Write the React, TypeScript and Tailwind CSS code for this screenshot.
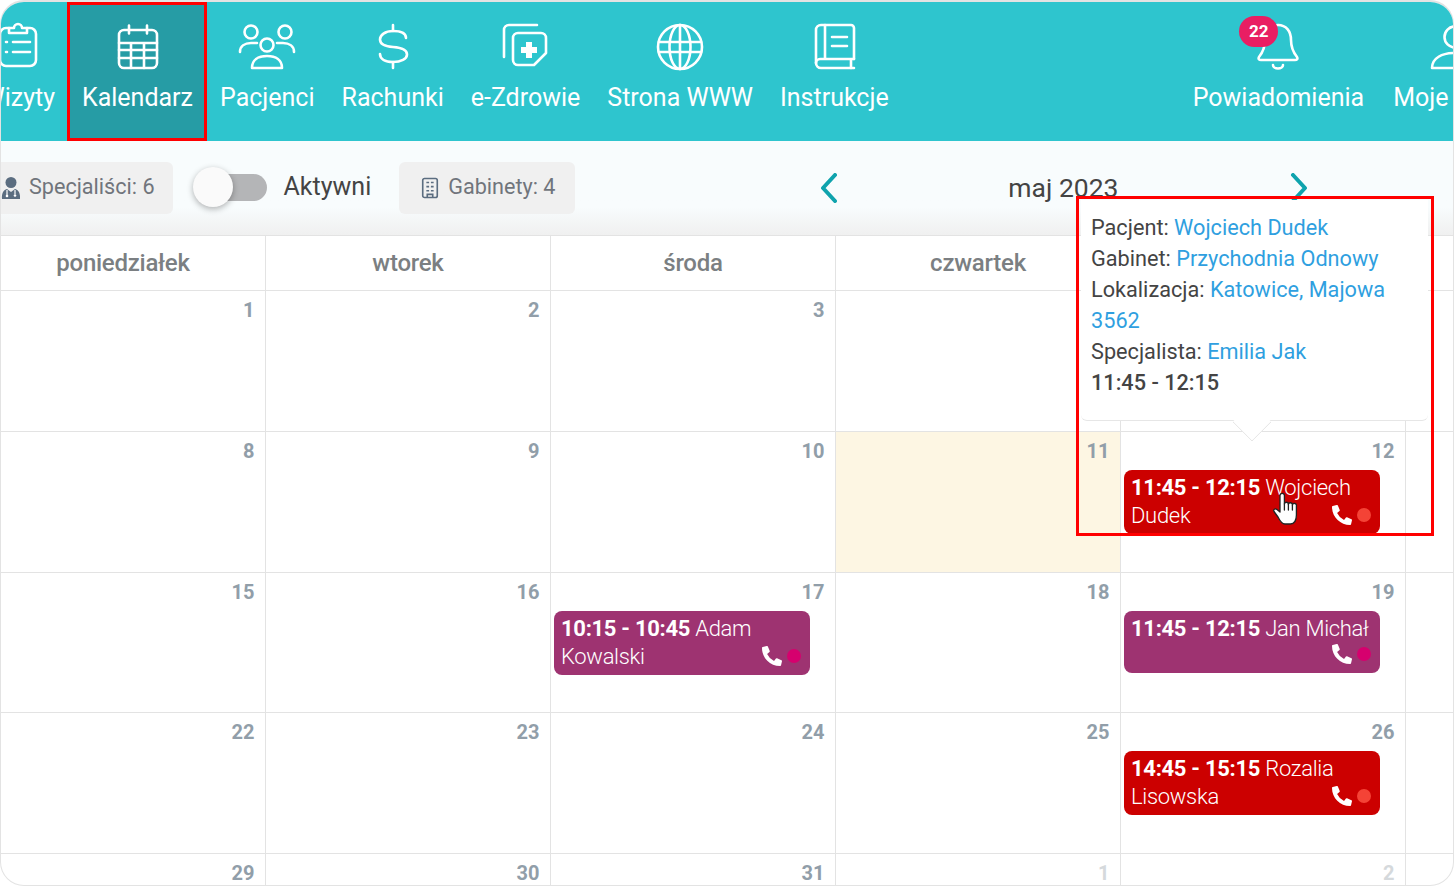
import type { ReactNode } from "react";
import { FaPhoneAlt } from "react-icons/fa";

function NavIcon({ children }: { children: ReactNode }) {
  return (
    <svg viewBox="0 0 64 64" fill="none" stroke="white" strokeWidth="2.6" strokeLinecap="round" strokeLinejoin="round" className="h-16 w-16 overflow-visible">
      {children}
    </svg>
  );
}

const icons: Record<string, ReactNode> = {
  visits: (
    <>
      <path d="M22 13h-3a6 6 0 0 0-6 6v26a6 6 0 0 0 6 6h24a6 6 0 0 0 6-6V19a6 6 0 0 0-6-6h-3" />
      <path d="M22 13h5a4 4 0 0 1 8 0h5v5H22z" />
      <path d="M19 27h1M19 37h1M26 27h17M26 37h17" />
    </>
  ),
  calendar: (
    <>
      <rect x="13" y="15" width="38" height="38" rx="5" />
      <path d="M23 10.500v8M41 10.500v8M13 28h38M13 35h38M13 43h38M25 28v25M38 28v25" />
    </>
  ),
  patients: (
    <>
      <circle cx="16" cy="17" r="6.5" />
      <circle cx="50" cy="17" r="6.5" />
      <circle cx="32" cy="30" r="6.5" />
      <path d="M5 37c0-6 5-9 11-9h6M59 37c0-6-5-9-11-9h-6" />
      <path d="M17 53c0-8 6-12 15-12s15 4 15 12z" />
    </>
  ),
  bills: (
    <>
      <path d="M32 10v6M32 47v6" />
      <path d="M45 23c0-5-6-7-13-7-8 0-13 4-13 8.500 0 5.500 6 7 13 7.500 8 .5 14 2 14 7.500 0 4.500-6 7.500-14 7.500s-13-3-13-8" />
    </>
  ),
  health: (
    <g transform="translate(-1 0)">
      <path d="M44 10H16a5 5 0 0 0-5 5v27" />
      <path d="M25 18h23a5 5 0 0 1 5 5v15L41 50H25a5 5 0 0 1-5-5V23a5 5 0 0 1 5-5z" />
      <path d="M36 27v16M28 35h16" strokeWidth="6" strokeLinecap="butt" />
    </g>
  ),
  www: (
    <>
      <circle cx="32" cy="32" r="22" />
      <ellipse cx="32" cy="32" rx="10.500" ry="22" />
      <path d="M32 10v44M11 27h42M11 37h42" />
    </>
  ),
  guide: (
    <>
      <path d="M52 44V13a3 3 0 0 0-3-3H19a5 5 0 0 0-5 5v33a5 5 0 0 0 5 5h33" />
      <path d="M14 48a4 4 0 0 1 4-4h34M49 44v9M23 10v34M30 22h15M30 31h15" />
    </>
  ),
  bell: (
    <>
      <path d="M32 10c8 0 13 6 13 15 0 8 2 12 6 17 1 2 0 3-2 3H15c-2 0-3-1-2-3 4-5 6-9 6-17 0-9 5-15 13-15z" />
      <path d="M27 50a5 3.500 0 0 0 10 0" />
    </>
  ),
  user: (
    <>
      <circle cx="32" cy="22" r="10.500" />
      <path d="M9 53c0-10 10-15 23-15s23 5 23 15z" />
    </>
  ),
};

function NavItem({ icon, label, active, badge }: { icon: string; label: string; active?: boolean; badge?: string }) {
  return (
    <div className={`relative flex h-[139px] shrink-0 flex-col items-center pt-[13px] ${active ? "-ml-[1.5px] bg-[#269ca5] pr-[13.5px] pl-[15px] outline-3 -outline-offset-3 outline-[#ff0000]" : "px-[13.5px]"}`}>
      <NavIcon>{icons[icon]}</NavIcon>
      <span className="mt-[4px] text-[25px] leading-[30px] whitespace-nowrap text-white">{label}</span>
      {badge && (
        <span className="absolute top-[14px] left-[60px] flex h-[31px] w-[39px] items-center justify-center rounded-full bg-[#e91e63] text-[17px] font-bold text-white">
          {badge}
        </span>
      )}
    </div>
  );
}

function Chip({ icon, children, className }: { icon: ReactNode; children: ReactNode; className: string }) {
  return (
    <div className={`flex h-[52px] shrink-0 items-center gap-[8px] rounded-md bg-[#f0f0f0] text-[21.600px] text-[#70757c] ${className}`}>
      {icon}
      {children}
    </div>
  );
}

type Event = { time: string; name: string; tone: "red" | "purple" };

const weeks: { day: number; muted?: boolean; today?: boolean; event?: Event }[][] = [
  [{ day: 1 }, { day: 2 }, { day: 3 }, { day: 4 }, { day: 5 }],
  [{ day: 8 }, { day: 9 }, { day: 10 }, { day: 11, today: true }, { day: 12, event: { time: "11:45 - 12:15", name: "Wojciech Dudek", tone: "red" } }],
  [
    { day: 15 },
    { day: 16 },
    { day: 17, event: { time: "10:15 - 10:45", name: "Adam Kowalski", tone: "purple" } },
    { day: 18 },
    { day: 19, event: { time: "11:45 - 12:15", name: "Jan Michał", tone: "purple" } },
  ],
  [{ day: 22 }, { day: 23 }, { day: 24 }, { day: 25 }, { day: 26, event: { time: "14:45 - 15:15", name: "Rozalia Lisowska", tone: "red" } }],
  [{ day: 29 }, { day: 30 }, { day: 31 }, { day: 1, muted: true }, { day: 2, muted: true }],
];

function EventCard({ event }: { event: Event }) {
  const red = event.tone === "red";
  return (
    <div className={`relative mr-[25.500px] ml-[3px] min-h-[62px] rounded-lg px-[7px] pt-[4px] pb-[4px] text-[22px] leading-[28px] tracking-[-0.3px] text-white ${red ? "bg-[#cc0000]" : "bg-[#9e3371]"}`}>
      <b className="font-bold">{event.time}</b> <span className="font-light">{event.name}</span>
      <div className="absolute right-[9px] bottom-[9px] flex items-center gap-[5px]">
        <FaPhoneAlt className="h-[20px] w-[20px] text-white" />
        <span className={`h-[14px] w-[14px] rounded-full ${red ? "bg-[#f44336]" : "bg-[#d6006e]"}`} />
      </div>
    </div>
  );
}

export default function App() {
  return (
    <div className="relative h-[886px] w-[1454px] overflow-hidden bg-white font-['Roboto',sans-serif]">
      <div className="h-full overflow-hidden rounded-[24px] border border-t-2 border-[#e3e3e3]">
        <nav className="-ml-[32px] flex h-[139px] w-[1600px] bg-[#2ec5ce]">
          <NavItem icon="visits" label="Wizyty" />
          <NavItem icon="calendar" label="Kalendarz" active />
          <NavItem icon="patients" label="Pacjenci" />
          <NavItem icon="bills" label="Rachunki" />
          <NavItem icon="health" label="e-Zdrowie" />
          <NavItem icon="www" label="Strona WWW" />
          <NavItem icon="guide" label="Instrukcje" />
          <div className="ml-[277px] flex">
            <NavItem icon="bell" label="Powiadomienia" badge="22" />
            <div className="ml-[2px]">
              <NavItem icon="user" label="Moje konto" />
            </div>
          </div>
        </nav>

        <div className="-ml-[19px] flex h-[95px] w-[1500px] items-center border-b border-[#e3e3e3] bg-linear-to-b from-[#f8fcfd] from-70% to-[#f0f0f0] pb-[1px]">
          <Chip
            className="pr-[18px] pl-[19px]"
            icon={
              <svg viewBox="0 0 20 24" className="h-[24px] w-[20px]">
                <circle cx="10" cy="6.500" r="5.500" fill="#5b6d80" />
                <path d="M1 23c-.5-5 1-9 5-10l4 3 4-3c4 1 5.500 5 5 10z" fill="#5b6d80" />
                <path d="M6 14v5M14 14v4" stroke="white" strokeWidth="1.200" fill="none" />
                <circle cx="6" cy="20" r="1.300" fill="white" />
                <circle cx="14" cy="19.500" r="1.300" fill="white" />
              </svg>
            }
          >
            Specjaliści: 6
          </Chip>
          <div className="relative ml-[20px] h-[27px] w-[74px] shrink-0">
            <div className="absolute top-0 right-0 h-[27px] w-[54px] rounded-full bg-[#b4b5b7]" />
            <div className="absolute top-[-7px] left-0 h-[40px] w-[40px] rounded-full bg-[#fafafa] shadow-[0_2px_6px_rgba(0,0,0,0.3)]" />
          </div>
          <span className="mb-[1px] ml-[17px] text-[25px] text-[#444444]">Aktywni</span>
          <div className="ml-[28px]">
            <Chip
              className="pr-[20px] pl-[21px]"
              icon={
                <svg viewBox="0 0 22 24" className="h-[22px] w-[20px]" fill="none" stroke="#5b6d80" strokeWidth="1.800">
                  <rect x="3" y="1.500" width="16" height="21" rx="2" />
                  <path d="M7 6h3M12 6h3M7 10.500h3M12 10.500h3M7 15h3M12 15h3M8 22v-3h6v3" />
                </svg>
              }
            >
              Gabinety: 4
            </Chip>
          </div>
          <div className="ml-[245px] flex w-[488px] items-center justify-between text-[26.500px] text-[#444444]">
            <svg viewBox="0 0 18 30" className="h-[30px] w-[18px]" fill="none" stroke="#0fa3ad" strokeWidth="4" strokeLinecap="round" strokeLinejoin="round">
              <path d="M15 2 3 15l12 13" />
            </svg>
            <span className="mr-[2px]">maj 2023</span>
            <svg viewBox="0 0 18 30" className="h-[30px] w-[18px]" fill="none" stroke="#0fa3ad" strokeWidth="4" strokeLinecap="round" strokeLinejoin="round">
              <path d="M3 2l12 13L3 28" />
            </svg>
          </div>
        </div>

        <div className="-ml-[20px] w-[1710px]">
          <div className="grid h-[54.500px] grid-cols-[repeat(6,285px)] border-b border-[#e3e3e3]">
            {["poniedziałek", "wtorek", "środa", "czwartek", "piątek", ""].map((d, i) => (
              <div key={i} className="flex items-center justify-center border-r border-[#e3e3e3] text-[24px] font-medium tracking-[-0.25px] text-[#7b7f82]">
                {d}
              </div>
            ))}
          </div>
          {weeks.map((week, w) => (
            <div key={w} className={`grid grid-cols-[repeat(6,285px)] border-b border-[#e3e3e3] ${w === 0 ? "h-[141.670px]" : "h-[140.670px]"}`}>
              {week.map((c, i) => (
                <div key={i} className={`border-r border-[#e3e3e3] ${c.today ? "bg-[#fdf6e3]" : ""}`}>
                  <div className={`h-[38px] pt-[5px] pr-[10.500px] text-right text-[20px] leading-[28px] font-bold ${c.muted ? "text-[#d5d9dc]" : "text-[#919ea9]"}`}>
                    {c.day}
                  </div>
                  {c.event && <EventCard event={c.event} />}
                </div>
              ))}
              <div className="border-r border-[#e3e3e3]" />
            </div>
          ))}
        </div>
      </div>

      <div className="absolute top-[200px] left-[1081px] w-[347px] rounded-b-md border-b border-[#e6e6e6] bg-white px-[10px] pt-[12px] pb-[22px] text-[21.700px] leading-[31px] text-[#444444]">
        <div>Pacjent: <span className="text-[#2f9fe0]">Wojciech Dudek</span></div>
        <div>Gabinet: <span className="text-[#2f9fe0]">Przychodnia Odnowy</span></div>
        <div>Lokalizacja: <span className="text-[#2f9fe0]">Katowice, Majowa 3562</span></div>
        <div>Specjalista: <span className="text-[#2f9fe0]">Emilia Jak</span></div>
        <div className="font-medium">11:45 - 12:15</div>
        <div className="absolute -bottom-[16px] left-[157px] h-[28px] w-[28px] rotate-45 rounded-br-[2px] border-r border-b border-[#e6e6e6] bg-white" />
      </div>

      <svg viewBox="0 0 24 31" className="absolute top-[493px] left-[1273px] h-[31px] w-[24px] overflow-visible" fill="white" stroke="#222222" strokeWidth="1.300" strokeLinejoin="round" strokeLinecap="round">
        <path d="M7 2.500a2.200 2.200 0 0 1 4.400 0V11a2 2 0 0 1 4 .5 2 2 0 0 1 4 .5 2 2 0 0 1 4 1v9c0 5-2 9-6 9h-5.400c-3 0-5-3-7-7L1 18.500c-1-2 1-3.500 3-2L7 19z" />
        <path d="M11.400 11v6M15.400 11.500v5.500M19.400 12v5" />
      </svg>

      <div className="pointer-events-none absolute top-[196px] left-[1076px] h-[340px] w-[358px] border-3 border-[#ff0000]" />
    </div>
  );
}
